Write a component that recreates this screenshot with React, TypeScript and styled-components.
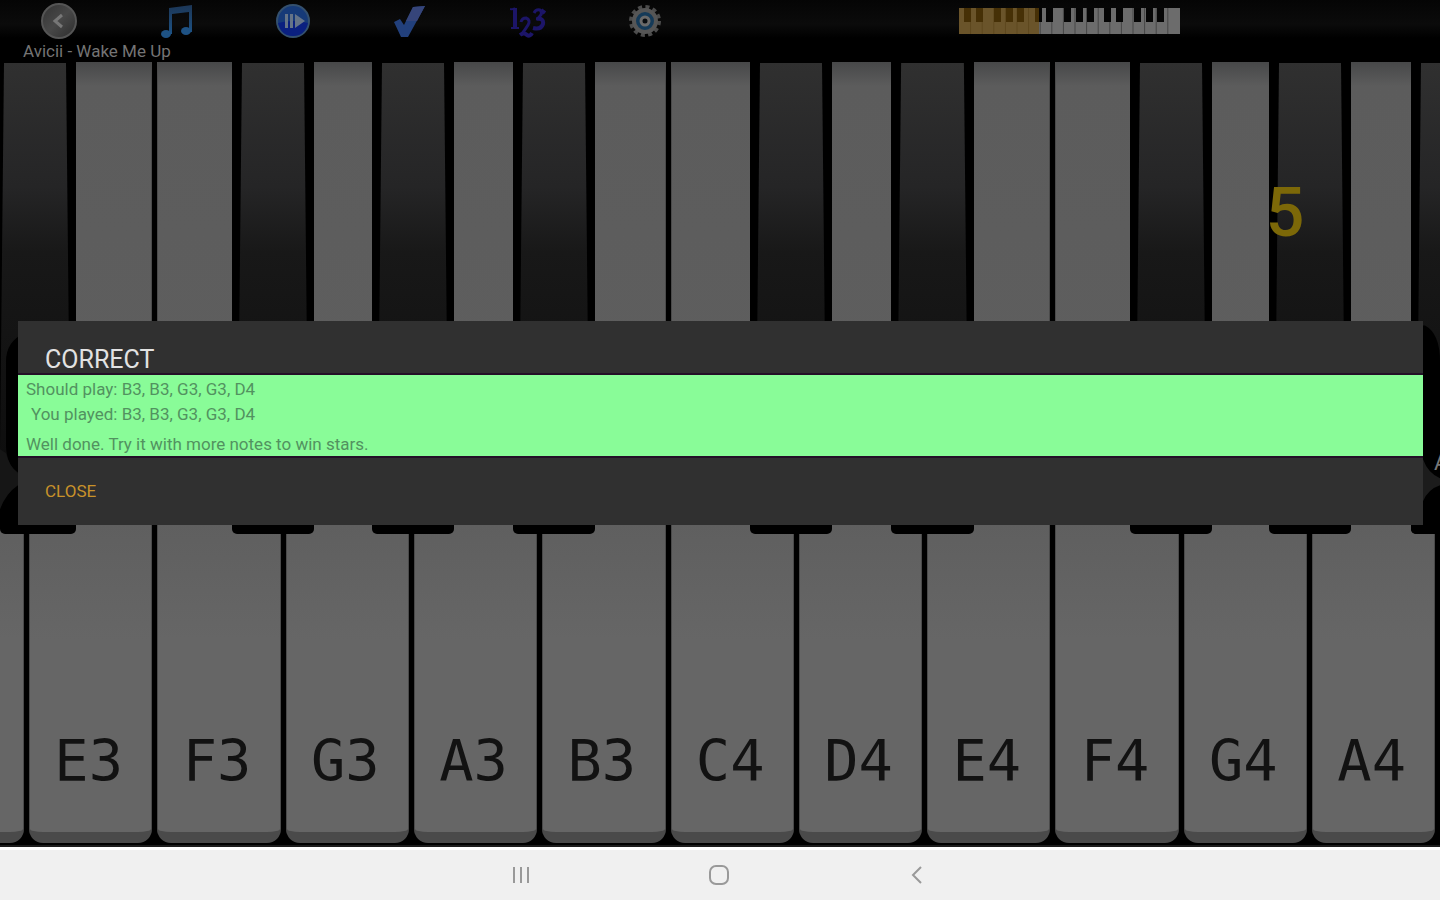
import React from 'react';
import styled, { createGlobalStyle } from 'styled-components';

const GlobalStyle = createGlobalStyle`
  *, *::before, *::after { box-sizing: border-box; }
  body { margin: 0; background: #000; font-family: Roboto, "Liberation Sans", sans-serif; }
  button { font: inherit; border: 0; padding: 0; background: none; cursor: pointer; }
`;

const Screen = styled.div`
  display: flex;
  flex-direction: column;
  min-height: 100vh;
  position: relative;
  overflow: hidden;
`;

const Toolbar = styled.header`
  display: grid;
  grid-template-columns: 49% 51%;
  grid-template-rows: 40px 22px;
  background: linear-gradient(#050505, #0b0b0b 24px, #000 38px);
`;

const Tools = styled.nav`
  display: grid;
  grid-template-columns: repeat(6, 1fr);
  padding-right: 2px;
`;

const ToolButton = styled.button`
  display: flex;
  justify-content: center;
  align-items: center;
  width: 100%;
`;

const Overview = styled.div`
  display: flex;
  align-items: center;
  padding: 2px 0 0 34.5%;
`;

const Song = styled.div`
  grid-column: 1 / -1;
  padding-left: 23px;
  font-size: 17px;
  line-height: 22px;
  color: #747474;
`;

const Keyboard = styled.main`
  flex: 1;
  position: relative;
  display: grid;
  grid-template-columns: 260fr repeat(11, 1283fr) 27fr;
  background: #000;
  border-bottom: 2px solid #1c1c1c;
`;

const WhiteKey = styled.button<{ $edge?: 'left' | 'right' }>`
  display: flex;
  flex-direction: column;
  justify-content: flex-end;
  align-items: center;
  min-width: 0;
  margin: 0 2px 2px 3px;
  ${(p) => p.$edge === 'left' && 'margin-left: -20px;'}
  ${(p) => p.$edge === 'right' && 'margin-right: -20px;'}
  padding: 0 4px 37px 0;
  border-radius: 0 0 14px 14px;
  border: solid #4a4a4a;
  border-width: 0 1px 11px;
  background: linear-gradient(#474849, #5c5c5c 24px, #5f5f5f 60%, #666 75%);
  font-family: "DejaVu Sans Mono", monospace;
  font-size: 57px;
  line-height: 68px;
  color: #121212;
`;

const BlackKeys = styled.div`
  position: absolute;
  inset: 0 0 auto 0;
  height: 60.3%;
  display: grid;
  grid-template-columns: 76fr 156fr 82fr 58fr 82fr 59fr 82fr 155fr 82fr 59fr 83fr 156fr 82fr 57fr 82fr 60fr 29fr;
  pointer-events: none;
`;

const BlackKey = styled.button<{ $column: number }>`
  grid-column: ${(p) => p.$column};
  position: relative;
  min-width: 0;
  overflow: hidden;
  background: #000;
  border-radius: 0 0 5px 5px;
  pointer-events: auto;
`;

const BlackKeyFace = styled.svg`
  display: block;
  width: 100%;
  height: 100%;
`;

const BlackKeyLabel = styled.span`
  position: absolute;
  top: 82%;
  left: 23px;
  font-size: 22px;
  line-height: 28px;
  color: #777;
`;

const Finger = styled.span`
  position: absolute;
  top: 111px;
  left: 87.9%;
  font-size: 68px;
  font-weight: 500;
  line-height: 80px;
  color: #7c6808;
`;

const Dialog = styled.section`
  position: absolute;
  top: 321px;
  left: 18px;
  right: 17px;
  display: flex;
  flex-direction: column;
  background: #303030;
`;

const DialogTitle = styled.h1`
  margin: 0;
  padding: 22px 27px 0;
  height: 52px;
  font-size: 25px;
  font-weight: 400;
  line-height: 34px;
  color: #e2e2e2;
`;

const Result = styled.div`
  display: flex;
  flex-direction: column;
  padding: 2px 8px 0;
  height: 85px;
  border: solid #241027;
  border-width: 2px 0;
  background: #89fc98;
  font-size: 17px;
  color: #529260;
`;

const Line = styled.p<{ $indent?: boolean; $gap?: boolean }>`
  margin: 0;
  line-height: 25px;
  ${(p) => p.$indent && 'padding-left: 5px;'}
  ${(p) => p.$gap && 'margin-top: 5px;'}
`;

const Actions = styled.div`
  display: flex;
  align-items: center;
  height: 67px;
  padding: 0 27px 2px;
`;

const CloseButton = styled.button`
  font-size: 17px;
  line-height: 24px;
  color: #c8922a;
`;

const NavBar = styled.footer`
  display: flex;
  justify-content: center;
  align-items: center;
  gap: 174px;
  height: 53px;
  padding-right: 3px;
  border-top: 3px solid #fff;
  background: #f0f0f0;
`;

const NavButton = styled.button`
  display: flex;
  align-items: center;
  justify-content: center;
  width: 24px;
  height: 24px;
`;

const notes = ['E3', 'F3', 'G3', 'A3', 'B3', 'C4', 'D4', 'E4', 'F4', 'G4', 'A4'];

const blackKeys = [
  { column: 3, note: 'F#3' },
  { column: 5, note: 'G#3' },
  { column: 7, note: 'A#3' },
  { column: 9, note: 'C#4' },
  { column: 11, note: 'D#4' },
  { column: 13, note: 'F#4' },
  { column: 15, note: 'G#4' },
];

const GradientDefs = styled.svg`
  position: absolute;
`;

const FaceGradient = () => (
  <GradientDefs width="0" height="0" aria-hidden="true">
    <defs>
      <linearGradient id="face" x1="0" y1="0" x2="0" y2="1">
        <stop offset="0" stopColor="#303030" />
        <stop offset=".3" stopColor="#252526" />
        <stop offset=".46" stopColor="#181818" />
        <stop offset="1" stopColor="#0d0d0d" />
      </linearGradient>
    </defs>
  </GradientDefs>
);

const facePath = 'M10 1H72L76 390Q74 410 66 414H16Q8 410 6 390Z';

const BackIcon = () => (
  <svg width="38" height="38" viewBox="0 0 38 38">
    <defs>
      <linearGradient id="back" x1="0" y1="0" x2="1" y2="1">
        <stop offset="0" stopColor="#333" />
        <stop offset=".5" stopColor="#484848" />
        <stop offset="1" stopColor="#2c2c2c" />
      </linearGradient>
    </defs>
    <circle cx="19" cy="20" r="17" fill="url(#back)" stroke="#555" strokeWidth="2" />
    <path d="M22 14l-7 6 7 6" fill="none" stroke="#777" strokeWidth="3" />
  </svg>
);

const MusicIcon = () => (
  <svg width="34" height="36" viewBox="0 0 34 36">
    <defs>
      <linearGradient id="music" x1="0" y1="0" x2="0" y2="1">
        <stop offset="0" stopColor="#1c3656" />
        <stop offset="1" stopColor="#1d5284" />
      </linearGradient>
    </defs>
    <path d="M10 6L33 3V30H30V10L13 12V32H10Z" fill="url(#music)" />
    <ellipse cx="7" cy="32" rx="5" ry="4" fill="#1e5284" />
    <ellipse cx="27" cy="29" rx="5" ry="4" fill="#1e5284" />
  </svg>
);

const PlayIcon = () => (
  <svg width="36" height="38" viewBox="0 0 36 38">
    <circle cx="18" cy="20" r="16" fill="#163a78" stroke="#34506e" strokeWidth="2" />
    <path d="M3 22Q18 18 33 22Q30 35 18 35Q6 35 3 22Z" fill="#0a2080" />
    <path d="M10 13h3v14h-3zM15 13h3v14h-3zM20 13l10 7-10 7z" fill="#657488" />
  </svg>
);

const CheckIcon = () => (
  <svg width="34" height="36" viewBox="0 0 34 36">
    <path d="M1 20l6-3 4 6L20 5l12-1L15 35H8Z" fill="#22407c" />
    <path d="M20 5l12-1-8 15h-11Z" fill="#36457a" />
  </svg>
);

const NumbersIcon = () => (
  <svg width="36" height="36" viewBox="0 0 36 36">
    <g fill="none" stroke="#1c1568">
      <path d="M5 6V25" strokeWidth="4" />
      <path d="M0 7Q3 8 5 6M1 26H9" strokeWidth="2" />
      <path d="M11 20Q12 16 16 16Q21 18 18 23Q15 28 11 33" strokeWidth="3" />
      <path d="M10 33Q14 30 17 33Q20 35 22 31" strokeWidth="4" />
      <path d="M24 11Q26 7 30 8Q33 11 30 14Q28 17 26 17" strokeWidth="3" />
      <path d="M27 17Q34 16 33 22Q31 28 23 26M31 8L35 11" strokeWidth="4" />
    </g>
  </svg>
);

const GearIcon = () => (
  <svg width="34" height="36" viewBox="0 0 34 36">
    <circle cx="17" cy="19" r="14" fill="none" stroke="#4c4c4c" strokeWidth="4" strokeDasharray="4 3.33" />
    <circle cx="17" cy="19" r="11" fill="#153a58" stroke="#565656" strokeWidth="4" />
    <circle cx="17" cy="19" r="4" fill="#080c10" stroke="#6a6a6a" strokeWidth="3" />
  </svg>
);

const MiniPiano = () => (
  <svg width="221" height="26" viewBox="0 0 221 26" role="img" aria-label="Keyboard range">
    <rect width="221" height="26" fill="#6c6c6c" />
    {Array.from({ length: 18 }, (_, i) => (
      <rect key={i} x={(i + 1) * 11.6 - 0.5} width="1" height="26" fill="#464646" />
    ))}
    {[5, 17, 35, 47, 58, 76, 87, 105, 117, 128, 145, 157, 175, 187, 198].map((x) => (
      <rect key={x} x={x} width="7" height="14" fill="#050505" />
    ))}
    <rect width="80" height="26" fill="#6a4808" opacity=".65" />
  </svg>
);

const tools = [
  { label: 'Back', Icon: BackIcon },
  { label: 'Songs', Icon: MusicIcon },
  { label: 'Play', Icon: PlayIcon },
  { label: 'Check', Icon: CheckIcon },
  { label: 'Notes', Icon: NumbersIcon },
  { label: 'Settings', Icon: GearIcon },
];

export default function App() {
  return (
    <Screen>
      <GlobalStyle />
      <FaceGradient />
      <Toolbar>
        <Tools>
          {tools.map(({ label, Icon }) => (
            <ToolButton key={label} aria-label={label}><Icon /></ToolButton>
          ))}
        </Tools>
        <Overview><MiniPiano /></Overview>
        <Song>Avicii - Wake Me Up</Song>
      </Toolbar>
      <Keyboard>
        <WhiteKey $edge="left" aria-label="D3" />
        {notes.map((n) => <WhiteKey key={n}>{n}</WhiteKey>)}
        <WhiteKey $edge="right" aria-label="B4" />
        <BlackKeys>
          <BlackKey $column={1} aria-label="D#3">
            <BlackKeyFace viewBox="6 0 76 473" preserveAspectRatio="none">
              <path d={facePath} fill="url(#face)" />
              <path d="M30 272Q12 280 12 300V385Q13 405 24 411H82V272Z" fill="#000" />
              <path d="M6 388L12 392Q15 405 24 412V424Q12 432 6 448Z" fill="#161616" />
            </BlackKeyFace>
          </BlackKey>
          {blackKeys.map(({ column, note }) => (
            <BlackKey key={note} $column={column} aria-label={note}>
              <BlackKeyFace viewBox="0 0 82 473" preserveAspectRatio="none">
                <path d={facePath} fill="url(#face)" />
              </BlackKeyFace>
            </BlackKey>
          ))}
          <BlackKey $column={17} aria-label="A#4">
            <BlackKeyFace viewBox="0 0 29 473" preserveAspectRatio="none">
              <path d={facePath} fill="url(#face)" />
              <path d="M0 264H14Q29 272 29 300V473H0Z" fill="#000" />
              <path d="M12 398Q17 412 29 417V424Q17 428 12 440Z" fill="#1c1c1c" />
            </BlackKeyFace>
            <BlackKeyLabel>A</BlackKeyLabel>
          </BlackKey>
        </BlackKeys>
        <Finger>5</Finger>
      </Keyboard>
      <Dialog role="dialog" aria-labelledby="result-title">
        <DialogTitle id="result-title">CORRECT</DialogTitle>
        <Result>
          <Line>Should play: B3, B3, G3, G3, D4</Line>
          <Line $indent>You played: B3, B3, G3, G3, D4</Line>
          <Line $gap>Well done. Try it with more notes to win stars.</Line>
        </Result>
        <Actions><CloseButton>CLOSE</CloseButton></Actions>
      </Dialog>
      <NavBar>
        <NavButton aria-label="Recent apps">
          <svg width="18" height="18" viewBox="0 0 18 18"><path d="M2 1v16M9 1v16M16 1v16" stroke="#999" strokeWidth="2" /></svg>
        </NavButton>
        <NavButton aria-label="Home">
          <svg width="20" height="20" viewBox="0 0 20 20"><rect x="1" y="1" width="18" height="18" rx="6" fill="none" stroke="#999" strokeWidth="2" /></svg>
        </NavButton>
        <NavButton aria-label="Go back">
          <svg width="12" height="18" viewBox="0 0 12 18"><path d="M10 1L2 9l8 8" fill="none" stroke="#999" strokeWidth="2" /></svg>
        </NavButton>
      </NavBar>
    </Screen>
  );
}
